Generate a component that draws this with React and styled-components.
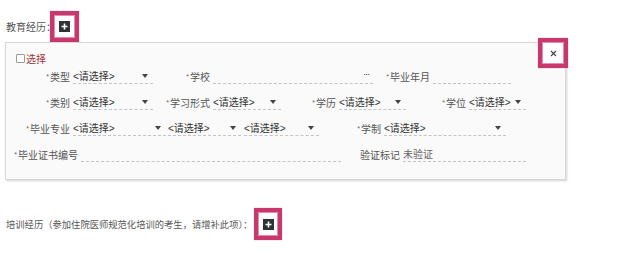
import React from "react";
import styled, { createGlobalStyle } from "styled-components";

const GlobalStyle = createGlobalStyle`
  html, body {
    margin: 0;
    padding: 0;
    background: #fff;
  }
  body {
    font-family: "Liberation Sans", "Noto Sans CJK SC", sans-serif;
    font-size: 10px;
    color: #555;
  }
`;

const Page = styled.div`
  width: 635px;
  height: 253px;
  overflow: hidden;
`;

const SectionHead = styled.div`
  display: flex;
  align-items: center;
  padding-left: 6px;
  padding-top: ${(p) => p.$top}px;
  height: ${(p) => p.$h}px;
  box-sizing: content-box;
`;

const HeadText = styled.span`
  font-size: ${(p) => p.$size || 10}px;
  color: #555;
  white-space: nowrap;
`;

const Highlight = styled.div`
  width: ${(p) => p.$w}px;
  height: ${(p) => p.$h}px;
  margin-left: ${(p) => p.$ml || 0}px;
  box-sizing: border-box;
  border: 4px solid #c7386c;
  box-shadow: inset 0 0 0 1px #e58bab, 0 0 1px #e58bab;
  background: #fff;
  display: flex;
  align-items: center;
  justify-content: center;
`;

const PlusSquare = styled.div`
  width: 11px;
  height: 11px;
  background: #2e3235;
  display: flex;
  align-items: center;
  justify-content: center;
`;

const Panel = styled.div`
  position: relative;
  margin-left: 5px;
  width: 561px;
  box-sizing: border-box;
  border: 1px solid #d8d8d8;
  background: #fafafa;
  box-shadow: 1px 1px 2px rgba(0, 0, 0, 0.18);
  padding: 6px 0 16px 0;
`;

const CloseFrame = styled(Highlight)`
  position: absolute;
  top: -5px;
  right: -3px;
`;

const CheckRow = styled.div`
  display: flex;
  align-items: center;
  height: 18px;
  padding-left: 10px;
`;

const CheckBox = styled.span`
  width: 7px;
  height: 7px;
  border: 1px solid #9a9a9a;
  border-radius: 1px;
  background: #fff;
  margin-right: 1px;
`;

const CheckLabel = styled.span`
  color: #a0353a;
`;

const Rows = styled.div`
  display: flex;
  flex-direction: column;
  gap: 8px;
`;

const Row = styled.div`
  display: flex;
  align-items: center;
  height: 18px;
  padding-left: 1px;
`;

const Label = styled.div`
  width: ${(p) => p.$w}px;
  text-align: right;
  padding-right: 3px;
  box-sizing: border-box;
  white-space: nowrap;
  color: #555;
`;

const Star = styled.span`
  font-size: 7px;
  vertical-align: 2px;
  margin-right: 1px;
  color: #666;
`;

const Control = styled.div`
  width: ${(p) => p.$w}px;
  margin-left: ${(p) => p.$ml || 0}px;
  height: 16px;
  box-sizing: border-box;
  border-bottom: 1px dashed #c4c4c4;
  display: flex;
  align-items: center;
  justify-content: space-between;
  padding: 0 5px 0 0;
  color: #333;
  white-space: nowrap;
`;

const Arrow = styled.span`
  width: 0;
  height: 0;
  border-left: 3px solid transparent;
  border-right: 3px solid transparent;
  border-top: 4px solid #444;
`;

const Dots = styled.span`
  font-size: 9px;
  color: #333;
  letter-spacing: -1px;
  margin-right: -1px;
  margin-top: -3px;
`;

const Value = styled.span`
  color: #666;
`;

function Plus() {
  return (
    <PlusSquare>
      <svg width="7" height="7" viewBox="0 0 7 7">
        <path d="M3.5 0.5v6M0.5 3.5h6" stroke="#fff" strokeWidth="1.6" />
      </svg>
    </PlusSquare>
  );
}

function Req({ children, w }) {
  return (
    <Label $w={w}>
      <Star>*</Star>
      {children}
    </Label>
  );
}

function Select({ w, ml }) {
  return (
    <Control $w={w} $ml={ml}>
      <span>&lt;请选择&gt;</span>
      <Arrow />
    </Control>
  );
}

export default function App() {
  return (
    <Page>
      <GlobalStyle />
      <SectionHead $top={11} $h={31}>
        <HeadText>教育经历：</HeadText>
        <Highlight $w={29} $h={31} $ml={-6}>
          <Plus />
        </Highlight>
      </SectionHead>

      <Panel>
        <CloseFrame $w={30} $h={30}>
          <svg width="7" height="7" viewBox="0 0 7 7">
            <path d="M1 1l5 5M6 1l-5 5" stroke="#444" strokeWidth="1.2" />
          </svg>
        </CloseFrame>

        <CheckRow>
          <CheckBox />
          <CheckLabel>选择</CheckLabel>
        </CheckRow>

        <Rows>
          <Row>
            <Req w={66}>类型</Req>
            <Select w={80} />
            <Req w={60}>学校</Req>
            <Control $w={160}>
              <span />
              <Dots>···</Dots>
            </Control>
            <Req w={60}>毕业年月</Req>
            <Control $w={78} />
          </Row>

          <Row>
            <Req w={66}>类别</Req>
            <Select w={80} />
            <Req w={60}>学习形式</Req>
            <Select w={68} />
            <Req w={58}>学历</Req>
            <Select w={67} />
            <Req w={63}>学位</Req>
            <Select w={57} />
          </Row>

          <Row>
            <Req w={66}>毕业专业</Req>
            <Select w={93} />
            <Select w={73} ml={2} />
            <Select w={75} ml={3} />
            <Req w={65}>学制</Req>
            <Select w={122} />
          </Row>

          <Row>
            <Req w={74}>毕业证书编号</Req>
            <Control $w={260} />
            <Label $w={62}>验证标记</Label>
            <Control $w={123}>
              <Value>未验证</Value>
            </Control>
          </Row>
        </Rows>
      </Panel>

      <SectionHead $top={28} $h={32}>
        <HeadText $size={9.3}>培训经历（参加住院医师规范化培训的考生，请增补此项）：</HeadText>
        <Highlight $w={28} $h={32} $ml={2}>
          <Plus />
        </Highlight>
      </SectionHead>
    </Page>
  );
}
